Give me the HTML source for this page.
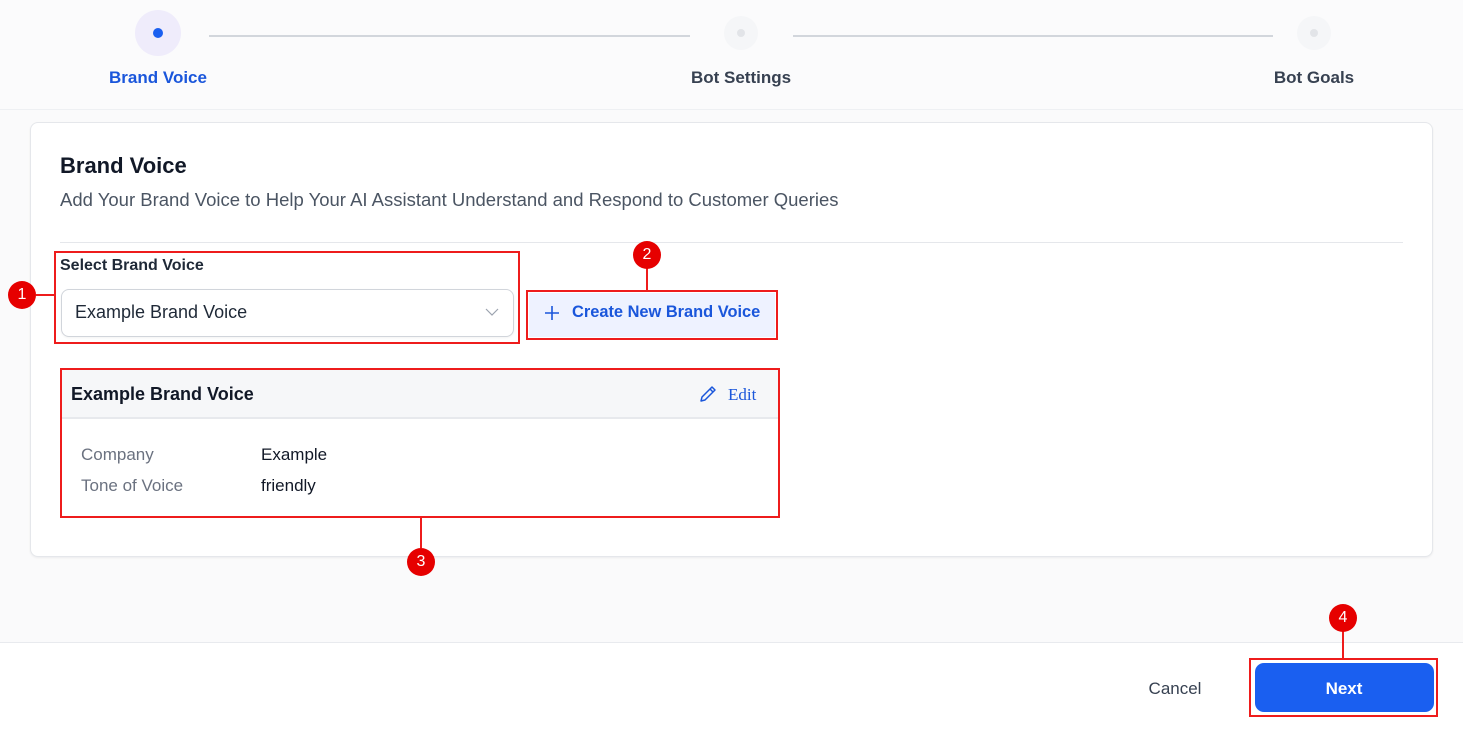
<!DOCTYPE html>
<html><head><meta charset="utf-8"><style>
*{margin:0;padding:0;box-sizing:border-box}
body{width:1463px;height:729px;background:#fafafb;font-family:"Liberation Sans",sans-serif;position:relative;overflow:hidden;color:#111827}
.a{position:absolute}
.c{transform:translateX(-50%);white-space:nowrap}
.badge{position:absolute;width:28px;height:28px;border-radius:50%;background:#e60000;color:#fff;font-size:16px;text-align:center;line-height:28px}
.red{position:absolute;border:2px solid #ee1c1c}
.rl{position:absolute;background:#ee1c1c}
</style></head><body>
<div class="a" style="left:0;top:0;width:1463px;height:110px;background:#fbfbfc;border-bottom:1px solid #eef0f3"></div>
<div class="a" style="left:135px;top:10px;width:46px;height:46px;border-radius:50%;background:#efecfb"></div>
<div class="a" style="left:153px;top:28px;width:10px;height:10px;border-radius:50%;background:#1a5ff0"></div>
<div class="a" style="left:209px;top:35px;width:481px;height:2px;background:#d2d6dc"></div>
<div class="a" style="left:724px;top:16px;width:34px;height:34px;border-radius:50%;background:#f5f6f8"></div>
<div class="a" style="left:737px;top:29px;width:8px;height:8px;border-radius:50%;background:#e2e4e8"></div>
<div class="a" style="left:793px;top:35px;width:480px;height:2px;background:#d2d6dc"></div>
<div class="a" style="left:1297px;top:16px;width:34px;height:34px;border-radius:50%;background:#f5f6f8"></div>
<div class="a" style="left:1310px;top:29px;width:8px;height:8px;border-radius:50%;background:#e2e4e8"></div>
<div class="a c" style="left:158px;top:68px;font-size:17px;font-weight:bold;color:#1a56db">Brand Voice</div>
<div class="a c" style="left:741px;top:68px;font-size:17px;font-weight:bold;color:#374151">Bot Settings</div>
<div class="a c" style="left:1314px;top:68px;font-size:17px;font-weight:bold;color:#374151">Bot Goals</div>

<div class="a" style="left:30px;top:122px;width:1403px;height:435px;background:#fff;border:1px solid #e5e7eb;border-radius:8px;box-shadow:0 1px 2px rgba(0,0,0,.06)"></div>
<div class="a" style="left:60px;top:153px;font-size:22px;font-weight:bold;color:#111827">Brand Voice</div>
<div class="a" style="left:60px;top:189px;font-size:18.5px;color:#4b5563">Add Your Brand Voice to Help Your AI Assistant Understand and Respond to Customer Queries</div>
<div class="a" style="left:60px;top:242px;width:1343px;height:1px;background:#e5e7eb"></div>

<div class="a" style="left:60px;top:257px;font-size:16px;font-weight:bold;color:#1f2937">Select Brand Voice</div>
<div class="a" style="left:61px;top:289px;width:453px;height:48px;border:1px solid #d1d5db;border-radius:8px;background:#fff;box-shadow:0 1px 2px rgba(0,0,0,.05)"></div>
<div class="a" style="left:75px;top:302px;font-size:18px;color:#1f2937">Example Brand Voice</div>
<svg class="a" style="left:485px;top:307px" width="14" height="10"><path d="M1 2l6 6 6-6" fill="none" stroke="#9ca3af" stroke-width="1.2"/></svg>
<div class="red" style="left:54px;top:251px;width:466px;height:93px"></div>
<div class="rl" style="left:36px;top:294px;width:18px;height:2px"></div>
<div class="badge" style="left:8px;top:281px">1</div>

<div class="a" style="left:529px;top:293px;width:246px;height:44px;background:#eef2ff"></div>
<svg class="a" style="left:544px;top:305px" width="16" height="16"><path d="M8 1v14M1 8h14" stroke="#1a56db" stroke-width="1.6"/></svg>
<div class="a" style="left:572px;top:303px;font-size:16.4px;font-weight:bold;color:#1a56db">Create New Brand Voice</div>
<div class="red" style="left:526px;top:290px;width:252px;height:50px"></div>
<div class="rl" style="left:646px;top:266px;width:2px;height:24px"></div>
<div class="badge" style="left:633px;top:241px">2</div>

<div class="a" style="left:62px;top:370px;width:716px;height:146px;background:#fff"></div>
<div class="a" style="left:62px;top:370px;width:716px;height:49px;background:#f6f7f9;border-bottom:2px solid #e7e9ed"></div>
<div class="a" style="left:71px;top:384px;font-size:18px;font-weight:bold;color:#111827">Example Brand Voice</div>
<svg class="a" style="left:698px;top:384px" width="20" height="20"><path d="M3 17l1-4L14 3l3 3L7 16z M12 5l3 3" fill="none" stroke="#1a56db" stroke-width="1.5" stroke-linejoin="round"/></svg>
<div class="a" style="left:728px;top:385px;font-size:17px;color:#1a56db;font-family:'Liberation Serif',serif">Edit</div>
<div class="a" style="left:81px;top:445px;font-size:17px;color:#6b7280">Company</div>
<div class="a" style="left:261px;top:445px;font-size:17px;color:#111827">Example</div>
<div class="a" style="left:81px;top:476px;font-size:17px;color:#6b7280">Tone of Voice</div>
<div class="a" style="left:261px;top:476px;font-size:17px;color:#111827">friendly</div>
<div class="red" style="left:60px;top:368px;width:720px;height:150px"></div>
<div class="rl" style="left:420px;top:518px;width:2px;height:30px"></div>
<div class="badge" style="left:407px;top:548px">3</div>

<div class="a" style="left:0;top:642px;width:1463px;height:87px;background:#fff;border-top:1px solid #e8eaee"></div>
<div class="a c" style="left:1175px;top:679px;font-size:17px;color:#374151">Cancel</div>
<div class="a" style="left:1255px;top:663px;width:179px;height:49px;background:#1a5ff0;border-radius:9px"></div>
<div class="a c" style="left:1344px;top:679px;font-size:17px;font-weight:bold;color:#fff">Next</div>
<div class="red" style="left:1249px;top:658px;width:189px;height:59px"></div>
<div class="rl" style="left:1342px;top:631px;width:2px;height:27px"></div>
<div class="badge" style="left:1329px;top:604px">4</div>
</body></html>
